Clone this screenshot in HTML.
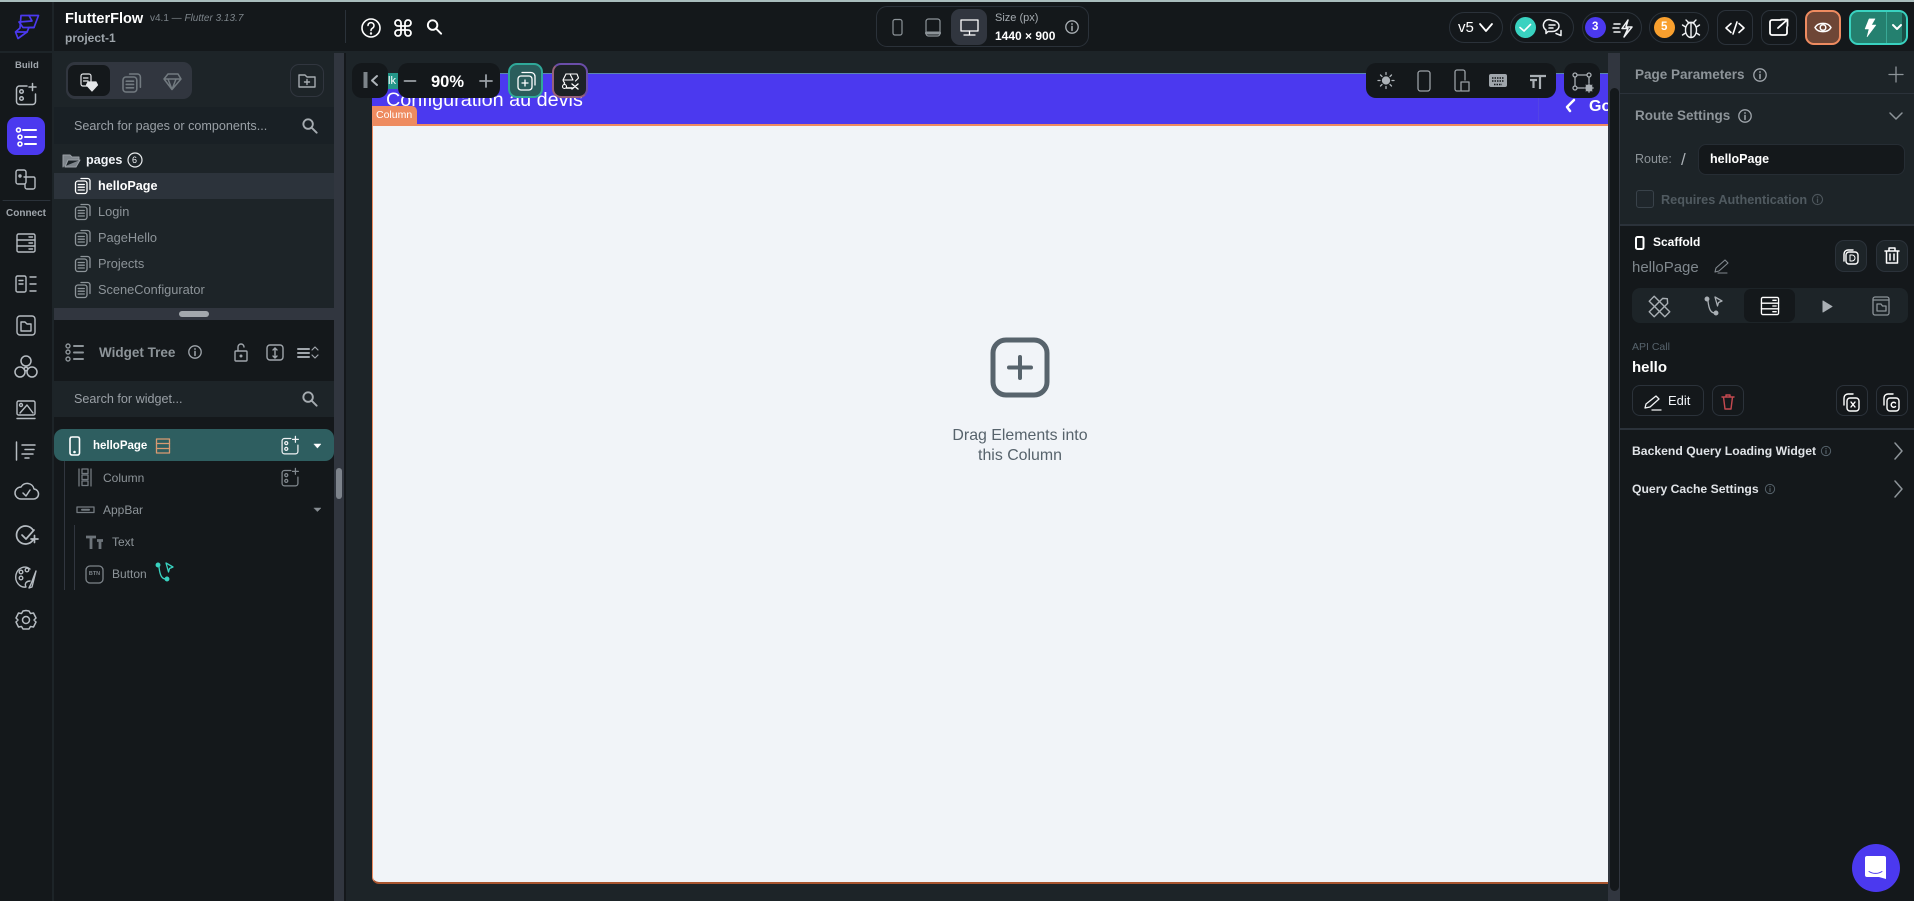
<!DOCTYPE html>
<html><head><meta charset="utf-8"><title>FlutterFlow</title>
<style>
html,body{margin:0;padding:0;background:#14181b;width:1914px;height:901px;overflow:hidden}
body{position:relative;font-family:"Liberation Sans",sans-serif}
.b{position:absolute;box-sizing:border-box}
.t{position:absolute;white-space:nowrap;line-height:1}
svg{position:absolute;left:0;top:0;overflow:visible}
.w{font-weight:700}
</style></head><body>
<!-- Base regions -->
<div class="b" style="left:0;top:0;width:1914px;height:2px;background:#a9bdbd"></div>
<div class="b" style="left:52px;top:2px;width:2px;height:899px;background:#1d2428"></div>
<div class="b" style="left:0;top:51px;width:1914px;height:2px;background:#1d2428"></div>
<div class="b" style="left:345px;top:10px;width:1px;height:33px;background:#2b323a"></div>

<!-- Left panel -->
<div class="b" style="left:54px;top:53px;width:280px;height:267px;background:#1d2428"></div>
<div class="b" style="left:54px;top:107px;width:280px;height:37px;background:#192025"></div>
<div class="b" style="left:334px;top:53px;width:10px;height:848px;background:#31363f"></div>
<div class="b" style="left:54px;top:308px;width:280px;height:12px;background:#31363f"></div>
<div class="b" style="left:179px;top:311px;width:30px;height:6px;border-radius:3px;background:#a3a8ad"></div>
<div class="b" style="left:336px;top:468px;width:6px;height:31px;border-radius:3px;background:#7d838b"></div>
<div class="b" style="left:66px;top:62px;width:126px;height:37px;border-radius:9px;background:#31363f"></div>
<div class="b" style="left:68px;top:65px;width:42px;height:31px;border-radius:7px;background:#14181b"></div>
<div class="b" style="left:290px;top:64px;width:34px;height:33px;border-radius:9px;border:1px solid #31363f"></div>
<div class="b" style="left:54px;top:173px;width:280px;height:26px;background:#2c333b"></div>
<div class="b" style="left:54px;top:381px;width:280px;height:36px;background:#1d2428"></div>
<div class="b" style="left:54px;top:429px;width:280px;height:32px;border-radius:9px;background:#2e5e60"></div>
<div class="b" style="left:64px;top:461px;width:1px;height:129px;background:#31363f"></div>
<div class="b" style="left:74px;top:525px;width:1px;height:65px;background:#31363f"></div>

<!-- Canvas -->
<div class="b" style="left:346px;top:53px;width:1262px;height:848px;background:#1d2428"></div>
<div class="b" style="left:372px;top:73px;width:1236px;height:52px;background:#4b39ef;border-top:1px solid #5a86b0"></div>
<div class="b" style="left:372px;top:124px;width:1236px;height:760px;background:#f1f4f8;border:1px solid #ee8b60;border-right:0;border-radius:0 0 0 7px;border-bottom:2px solid #a8552f"></div>
<div class="b" style="left:372px;top:124px;width:1236px;height:2px;background:#ee8b60"></div>
<div class="b" style="left:388px;top:73px;width:10px;height:16px;background:#249689"></div>
<div class="t" style="left:388px;top:76px;font-size:11px;color:#fff">lk</div>
<div class="t" style="left:386px;top:91px;font-size:19.8px;color:#fff">Configuration au devis</div>
<div class="b" style="left:372px;top:106px;width:45px;height:18px;border-radius:0 5px 0 0;background:#ee8b60"></div>
<div class="t" style="left:376px;top:110px;font-size:10.5px;color:#fff">Column</div>
<div class="b" style="left:1538px;top:74px;width:70px;height:48px;border-left:1px solid #5344e6"></div>
<div class="t w" style="left:1589px;top:99px;font-size:16px;color:#fff;width:19px;overflow:hidden">Go</div>
<div class="t" style="left:950px;top:428px;width:140px;text-align:center;font-size:15.9px;color:#57636c">Drag Elements into</div>
<div class="t" style="left:950px;top:448px;width:140px;text-align:center;font-size:15.9px;color:#57636c">this Column</div>

<!-- Scrollbar center -->
<div class="b" style="left:1608px;top:53px;width:12px;height:848px;background:#31363f"></div>
<div class="b" style="left:1610px;top:88px;width:9px;height:803px;border-radius:5px;background:#14181b"></div>

<!-- Right panel -->
<div class="b" style="left:1620px;top:53px;width:294px;height:172px;background:#1d2428"></div>
<div class="b" style="left:1620px;top:93px;width:294px;height:1px;background:#2b323a"></div>
<div class="b" style="left:1620px;top:224px;width:294px;height:2px;background:#2b323a"></div>
<div class="b" style="left:1698px;top:144px;width:207px;height:31px;border-radius:8px;background:#14181b;border:1px solid #262d34"></div>
<div class="b" style="left:1636px;top:190px;width:18px;height:18px;border-radius:3px;border:1px solid #39424a;background:#1f262b"></div>
<div class="b" style="left:1835px;top:240px;width:32px;height:32px;border-radius:9px;background:#1d2428;border:1px solid #2b323a"></div>
<div class="b" style="left:1876px;top:240px;width:32px;height:32px;border-radius:9px;background:#1d2428;border:1px solid #2b323a"></div>
<div class="b" style="left:1632px;top:288px;width:276px;height:35px;border-radius:8px;background:#1d2428"></div>
<div class="b" style="left:1744px;top:289px;width:51px;height:33px;border-radius:7px;background:#14181b"></div>
<div class="b" style="left:1632px;top:385px;width:72px;height:31px;border-radius:8px;border:1px solid #2b323a"></div>
<div class="b" style="left:1712px;top:385px;width:32px;height:31px;border-radius:8px;border:1px solid #2b323a"></div>
<div class="b" style="left:1836px;top:385px;width:32px;height:31px;border-radius:8px;border:1px solid #2b323a"></div>
<div class="b" style="left:1876px;top:385px;width:32px;height:31px;border-radius:8px;border:1px solid #2b323a"></div>
<div class="b" style="left:1620px;top:428px;width:294px;height:2px;background:#2b323a"></div>
<div class="b" style="left:1852px;top:844px;width:48px;height:48px;border-radius:50%;background:#4b39ef"></div>

<!-- Top bar boxes -->
<div class="b" style="left:876px;top:6px;width:213px;height:41px;border-radius:11px;border:1px solid #2b323a"></div>
<div class="b" style="left:951px;top:9px;width:36px;height:36px;border-radius:9px;background:#31363f"></div>
<div class="b" style="left:1449px;top:12px;width:54px;height:31px;border-radius:16px;border:1px solid #2b323a"></div>
<div class="b" style="left:1510px;top:12px;width:64px;height:31px;border-radius:16px;border:1px solid #2b323a"></div>
<div class="b" style="left:1582px;top:12px;width:60px;height:31px;border-radius:16px;border:1px solid #2b323a"></div>
<div class="b" style="left:1649px;top:12px;width:60px;height:31px;border-radius:16px;border:1px solid #2b323a"></div>
<div class="b" style="left:1717px;top:10px;width:36px;height:35px;border-radius:9px;border:1px solid #2b323a"></div>
<div class="b" style="left:1761px;top:10px;width:36px;height:35px;border-radius:9px;border:1px solid #2b323a"></div>
<div class="b" style="left:1805px;top:10px;width:36px;height:35px;border-radius:9px;background:#6e4636;border:2px solid #ee8b60"></div>
<div class="b" style="left:1849px;top:10px;width:59px;height:35px;border-radius:9px;background:#24806f;border:2px solid #39d2c0;overflow:hidden"><div class="b" style="left:35px;top:0;width:1px;height:31px;background:#39a896"></div><div class="b" style="left:51px;top:0;width:6px;height:31px;background:#1a4f48"></div></div>
<div class="b" style="left:1515px;top:17px;width:21px;height:21px;border-radius:50%;background:#39d2c0"></div>
<div class="b" style="left:1585px;top:17px;width:21px;height:21px;border-radius:50%;background:#4b39ef"></div>
<div class="b" style="left:1654px;top:17px;width:21px;height:21px;border-radius:50%;background:#f9a02e"></div>

<!-- Floating toolbars -->
<div class="b" style="left:352px;top:63px;width:36px;height:35px;border-radius:10px;background:#14181b"></div>
<div class="b" style="left:398px;top:63px;width:102px;height:35px;border-radius:10px;background:#14181b"></div>
<div class="b" style="left:508px;top:63px;width:35px;height:35px;border-radius:9px;background:#2a5d5c;border:2px solid #2fa899"></div>
<div class="b" style="left:552px;top:63px;width:36px;height:35px;border-radius:9px;background:#1d2226;border:2px solid #6a4da8;border-bottom-color:#96607a;border-left-color:#96607a"></div>
<div class="b" style="left:1366px;top:63px;width:190px;height:35px;border-radius:10px;background:#14181b"></div>
<div class="b" style="left:1564px;top:63px;width:36px;height:35px;border-radius:10px;background:#14181b"></div>
<div class="t w" style="left:431px;top:74px;font-size:16.5px;color:#fff">90%</div>

<svg width="1914" height="901" viewBox="0 0 1914 901" fill="none" stroke-linecap="round" stroke-linejoin="round">
<defs>
<symbol id="info" viewBox="-8 -8 16 16" overflow="visible"><circle r="6.2" stroke="currentColor" stroke-width="1.3" fill="none"/><path d="M0-.6V3.4" stroke="currentColor" stroke-width="1.5" fill="none"/><circle cy="-3" r=".9" fill="currentColor"/></symbol>
<symbol id="page" viewBox="-10 -10 20 20" overflow="visible"><g fill="none" stroke="currentColor" stroke-width="1.3"><rect x="-7.5" y="-5" width="11.5" height="12.5" rx="2.5"/><path d="M-2-7.5H4.5a2.5 2.5 0 0 1 2.5 2.5V3.5M-4.8-1.5H1.3M-4.8 1.2H1.3M-4.8 4H1.3"/></g></symbol>
<symbol id="search" viewBox="-10 -10 20 20" overflow="visible"><g fill="none" stroke="currentColor" stroke-width="2"><circle cx="-2" cy="-2" r="5"/><path d="M2 2L7 7"/></g></symbol>
<symbol id="addw" viewBox="-12 -12 24 24" overflow="visible"><g fill="none" stroke="currentColor" stroke-width="1.5"><path d="M1-9H-6.5A3 3 0 0 0-9.5-6V6.5A3 3 0 0 0-6.5 9.5H6.5A3 3 0 0 0 9.5 6.500V-1"/><circle cx="-4.500" cy="-3.500" r="1.800"/><circle cx="-4.500" cy="3.500" r="1.800"/><path d="M6.500-11.500V-4.500M3-8H10"/></g></symbol>
<symbol id="server" viewBox="-10 -10 20 20" overflow="visible"><g fill="none" stroke="currentColor" stroke-width="1.4"><rect x="-9" y="-9" width="18" height="18" rx="1.500"/><path d="M-9-3H9M-9 3H9M3-6H6.500M3 0H6.500M3 6H6.500"/></g></symbol>
<symbol id="flow" viewBox="-10 -10 20 20" overflow="visible"><g fill="none" stroke="currentColor" stroke-width="1.3"><circle cx="-7" cy="-7" r="1.800" fill="currentColor"/><circle cx="2" cy="7" r="1.800" fill="currentColor"/><path d="M-6-5C-5 4-3 7 1 7M1-9L8-5L4.500-3.500L3.500 0Z"/></g></symbol>
</defs>

<!-- logo -->
<g stroke="#4b39ef" stroke-width="1.700"><path d="M21 15.500H38.500L34 27.500H29L27 32L18 38.500L15.500 32L20 28Z"/><path d="M19 22L32 21L29 15.500M19 22L23 27.500H34M16 32H27"/></g>

<!-- left rail -->
<g color="#b6bcc2" stroke="#b6bcc2">
<use href="#addw" x="14" y="83" width="24" height="24"/>
<rect x="7" y="117" width="38" height="38" rx="9" fill="#4b39ef" stroke="none"/>
<g stroke="#fff" stroke-width="1.600"><circle cx="18.500" cy="130" r="2"/><circle cx="20" cy="137" r="2"/><circle cx="20" cy="144" r="2"/><path d="M23 130H36M25 137H36M25 144H36" stroke-width="2"/></g>
<g stroke-width="1.400"><rect x="16" y="170" width="10" height="14" rx="2"/><path d="M24 177H34a2 2 0 0 1 1 2V187a2 2 0 0 1-2 2H27a2 2 0 0 1-2-2V184"/><circle cx="20" cy="176" r="1"/></g>
<path d="M3 200.500H50" stroke="#2b323a" stroke-width="1"/>
<use href="#server" x="16" y="233" width="20" height="20" stroke="none"/>
<g stroke-width="1.400"><rect x="16" y="276" width="10" height="16" rx="1.500"/><path d="M19 280.500h4M19 284h4M30 277H36M30 284H36M30 291H36" /></g>
<g stroke-width="1.400"><rect x="17" y="316" width="18" height="19" rx="3"/><path d="M21 328V322H25L27 324H31V331H21Z"/></g>
<g stroke-width="1.500"><circle cx="26" cy="361" r="5"/><circle cx="20" cy="372" r="5"/><circle cx="32" cy="372" r="5"/><circle cx="26" cy="369" r="1.800"/></g>
<g stroke-width="1.400"><rect x="17" y="401" width="18" height="14" rx="1.500"/><path d="M20 413L27 405L33 413M17 418.500H35"/><circle cx="21" cy="405" r="1.500"/></g>
<g stroke-width="1.500"><path d="M16.500 442V460M22 445H35M25 449.500H34M22 454H33M25 458H29"/></g>
<path d="M21 499H33a5 5 0 0 0 1-10A7 7 0 0 0 21 487A6 6 0 0 0 21 499ZM23 493L26 496L30 490" stroke-width="1.500"/>
<path d="M33 530A9 9 0 1 0 33 540M22 535L26 539L34 530M31 539H38M34.500 535.500V542.500" stroke-width="1.700"/>
<g stroke-width="1.400"><path d="M30 569A9 10 0 1 0 26 587C24 583 27 581 30 581"/><circle cx="21" cy="572" r="1.800"/><circle cx="21" cy="578" r="1.800"/><circle cx="27" cy="570" r="1.800"/><path d="M36 571L31 584L29 588L32 587Z"/></g>
<g stroke-width="1.500"><circle cx="26" cy="620" r="3.500"/><path d="M26 610.500L29 611L30.500 613.500L33.500 613L36 618L34 620L36 622L33.500 627L30.500 626.500L29 629L23 629L21.500 626.500L18.500 627L16 622L18 620L16 618L18.500 613L21.500 613.500L23 611Z"/></g>
</g>

<!-- left panel icons -->
<g color="#c9ced3" stroke="#e5e7ea" stroke-width="1.200"><rect x="81" y="74" width="10" height="12" rx="2"/><path d="M83.500 78H88M83.500 81H88"/><path d="M88 82H96L97.500 85L92 91L86.500 85Z" fill="#e5e7ea"/></g>
<use href="#page" x="120" y="71" width="24" height="24" color="#727a80"/>
<g stroke="#727a80" stroke-width="1.500"><path d="M168 74H178L181 79L172 89.500L164 79ZM164 79H181M168 79L172 89.500L176 79"/></g>
<path d="M299 87V75H305L307 77H315V87ZM304.500 82H309.500M307 79.500V84.500" stroke="#a5abb0" stroke-width="1.400"/>
<use href="#search" x="300.500" y="116.500" width="19" height="19" color="#a5abb0"/>
<path d="M63 167V155H70L72 157H79V160H68L65 167H76L80 160" stroke="#9aa0a6" fill="#7d848a" stroke-width="1"/>
<circle cx="135" cy="160" r="7" stroke="#e8ebed" stroke-width="1.200"/>
<use href="#page" x="73" y="176" width="20" height="20" color="#fff"/>
<use href="#page" x="73" y="202" width="20" height="20" color="#8d9499"/>
<use href="#page" x="73" y="228" width="20" height="20" color="#8d9499"/>
<use href="#page" x="73" y="254" width="20" height="20" color="#8d9499"/>
<use href="#page" x="73" y="280" width="20" height="20" color="#8d9499"/>

<g stroke="#8d9499" stroke-width="1.400"><circle cx="68" cy="346" r="2"/><circle cx="68" cy="352" r="2"/><circle cx="68" cy="359" r="2"/><path d="M74 346H83M74 352.500H83M74 359H83" stroke-width="2"/></g>
<use href="#info" x="187" y="344" width="16" height="16" color="#a0a6ac"/>
<g stroke="#a0a6ac" stroke-width="1.400"><rect x="235" y="351" width="12" height="10" rx="1"/><path d="M238 351V347a3 3 0 0 1 6 0"/><circle cx="241" cy="356" r=".8"/></g>
<g stroke="#a0a6ac" stroke-width="1.400"><rect x="267" y="345" width="16" height="15" rx="3"/><path d="M275 348V358M273 350L275 348L277 350M273 356L275 358L277 356"/></g>
<path d="M298 349H309M298 353H309M298 357H309" stroke="#a0a6ac" stroke-width="2"/>
<path d="M312 350L315 347L318 350M312 355L315 358L318 355" stroke="#a0a6ac" stroke-width="1.200"/>
<use href="#search" x="300.500" y="389.500" width="19" height="19" color="#a5abb0"/>

<g stroke="#fff" fill="#fff" stroke-width="1"><rect x="70" y="437" width="9.500" height="18" rx="2" stroke-width="1.600" fill="none"/><circle cx="74.500" cy="452" r=".8"/><path d="M70.500 437H79" /></g>
<g stroke="#d99a72" stroke-width="1.300"><rect x="156.500" y="439" width="13" height="14" /><path d="M156.500 443.500H169.500M156.500 448.500H169.500"/></g>
<use href="#addw" x="280" y="436" width="20" height="20" color="#f0f2f4"/>
<path d="M314 444H321L317.500 448Z" fill="#fff" stroke="#fff" stroke-width=".5"/>
<g stroke="#737a80" stroke-width="1.300"><path d="M79 469V486M91 469V486"/><rect x="82" y="469" width="6" height="4.500"/><rect x="82" y="475" width="6" height="4.500"/><rect x="82" y="481" width="6" height="4.500"/></g>
<use href="#addw" x="280" y="468" width="20" height="20" color="#82898f"/>
<g stroke="#737a80" stroke-width="1.300"><rect x="77" y="507" width="17" height="5.500"/><path d="M82 509.800H89" stroke-width="2"/></g>
<path d="M314 508H321L317.500 511.500Z" fill="#878d93" stroke="#878d93" stroke-width=".5"/>
<path d="M86 537H96M91 537V549M97 540.500H103M100 540.500V549" stroke="#6d747a" stroke-width="2.800" stroke-linecap="butt"/>
<rect x="86" y="566" width="17" height="17" rx="4" stroke="#7d848a" stroke-width="1.300"/>
<use href="#flow" x="155" y="562" width="20" height="20" color="#39d2c0"/>

<!-- top toolbar left -->
<g stroke="#fff"><circle cx="371" cy="28" r="9" stroke-width="1.600"/><path d="M368 25.500a3 3 0 1 1 4.500 2.700c-1 .6-1.500 1-1.500 2.300" stroke-width="1.500"/><circle cx="371" cy="33.500" r=".7" stroke-width="1"/>
<path d="M400 23V33a3 3 0 1 1-3-3H407a3 3 0 1 1-3 3V23a3 3 0 1 1 3 3H397a3 3 0 1 1 3-3Z" stroke-width="1.800" transform="translate(1 0)"/></g>
<use href="#search" x="425" y="17.500" width="19" height="19" color="#fff"/>

<!-- device icons -->
<rect x="893" y="19.500" width="9" height="15.500" rx="2" stroke="#8d9499" stroke-width="1.200"/>
<rect x="926" y="19" width="14" height="17" rx="2.500" stroke="#8d9499" stroke-width="1.200"/><path d="M926.500 33H939.500" stroke="#8d9499" stroke-width="3"/>
<g stroke="#fff"><rect x="961" y="20" width="17" height="11" stroke-width="1.300"/><path d="M969.500 31V34M964 35H975" stroke-width="1.300"/></g>
<use href="#info" x="1064" y="19" width="16" height="16" color="#a9afb4"/>

<!-- top right icons -->
<path d="M1480 24L1486 31L1492 24" stroke="#fff" stroke-width="1.800"/>
<path d="M1520 27.500L1524 31L1530.500 24.500" stroke="#fff" stroke-width="1.600"/>
<g stroke="#f0f2f4" stroke-width="1.500"><path d="M1552 20.500a7 5.500 0 0 1 0 11H1548L1546 33.500V30a5.500 5.500 0 0 1 6-9.500ZM1549 25H1555M1549 28H1553M1556 33.500L1561 35.500V30.500"/></g>
<g stroke="#f0f2f4" stroke-width="1.500"><path d="M1614 24H1620M1613 28H1619M1614 32H1620"/><path d="M1628 20L1622 28.500H1628L1624 37L1632 27H1626L1628 20Z"/></g>
<g stroke="#f0f2f4" stroke-width="1.400"><ellipse cx="1691" cy="30" rx="5.500" ry="7.500"/><path d="M1691 23V37M1688 22L1686 20M1694 22L1696 20M1685.500 27L1682.500 25M1696.500 27L1699.500 25M1685.500 33L1682.500 35M1696.500 33L1699.500 35M1688 22.500H1694"/></g>
<path d="M1731 23.500L1726 28L1731 32.500M1739 23.500L1744 28L1739 32.500M1737 22L1733 34" stroke="#fff" stroke-width="1.600"/>
<path d="M1781 20H1772a2 2 0 0 0-2 2V33a2 2 0 0 0 2 2H1785a2 2 0 0 0 2-2V27" stroke="#fff" stroke-width="1.800"/><path d="M1778 28L1787 20M1781 19.500H1787.500V26" stroke="#fff" stroke-width="1.800"/>
<path d="M1815 27.500C1818 22 1828 22 1831 27.500C1828 33 1818 33 1815 27.500Z" stroke="#fff" stroke-width="1.500"/><circle cx="1823" cy="27.500" r="2.800" stroke="#fff" stroke-width="1.500"/>
<path d="M1869 19L1865 29H1869L1867 37L1876 25H1871.500L1875 19Z" fill="#fff" stroke="#fff" stroke-width=".5"/>
<path d="M1893 25L1897 29L1901 25" stroke="#fff" stroke-width="2"/>

<!-- floating toolbar icons -->
<path d="M365.500 72V88" stroke="#7d848a" stroke-width="4" stroke-linecap="butt"/><path d="M377 76L372 80.500L377 85" stroke="#aeb4b9" stroke-width="2"/>
<path d="M404.500 81H415.500M480 81H492M486 75V87" stroke="#9aa0a6" stroke-width="1.800"/>
<g stroke="#fff" stroke-width="1.300"><rect x="518" y="76" width="14" height="14" rx="3"/><path d="M522 72.500H531a4 4 0 0 1 4 4V85M525 80V86M522 83H528"/></g>
<g stroke="#fff" stroke-width="1.100"><path d="M566 74H577L578.500 78L575.500 81M566 74L563 80H573L570 74M563 80C563 82 566 83 564 84"/><circle cx="564.500" cy="86.500" r="2"/><path d="M566.500 88H572M572 84L578 89M578 84L572 89" stroke-width="1.400"/></g>
<g stroke="#aeb4b9" stroke-width="1.300"><circle cx="1386" cy="80.500" r="3.500" fill="#aeb4b9"/><path d="M1386 72.500V74.500M1386 86.500V88.500M1378 80.500H1380M1392 80.500H1394M1380.500 75L1382 76.500M1390 84.500L1391.500 86M1380.500 86L1382 84.500M1390 76.500L1391.500 75"/></g>
<rect x="1418" y="71" width="12" height="20" rx="2.500" stroke="#9aa0a6" stroke-width="1.300"/>
<g stroke="#9aa0a6" stroke-width="1.300"><path d="M1465 73V72a2 2 0 0 0-2-2H1457a2 2 0 0 0-2 2V89a2 2 0 0 0 2 2H1460"/><rect x="1461" y="82" width="8" height="9"/><path d="M1465 73V80"/></g>
<rect x="1489" y="74" width="18" height="13" rx="2" fill="#a0a6ac"/><path d="M1492 78H1504M1492 81H1504M1494 84.500H1502" stroke="#14181b" stroke-width="1.400" stroke-dasharray="1.500 1" stroke-linecap="butt"/>
<g stroke="#a9afb4" stroke-width="2.200" stroke-linecap="butt"><path d="M1530 76H1546M1540 76V89M1530 80H1537M1533.500 80V88"/></g>
<g stroke="#a9afb4" stroke-width="1.300"><circle cx="1575" cy="75" r="2"/><circle cx="1589" cy="75" r="2"/><circle cx="1575" cy="88" r="2"/><path d="M1577 75H1587M1575 77V86M1589 77V83M1577 88H1584"/><circle cx="1589" cy="88" r="3" fill="#a9afb4"/><path d="M1589 83.500V92.500M1584.500 88H1593.500M1586 85L1592 91M1592 85L1586 91" stroke-width="1"/></g>

<!-- back arrow -->
<path d="M1574 100L1567 107L1570 111" stroke="#fff" stroke-width="2.500"/>

<!-- plus -->
<rect x="993" y="340" width="54" height="55" rx="13" stroke="#57636c" stroke-width="5"/>
<path d="M1020 357V378M1009 367.500H1031" stroke="#57636c" stroke-width="4"/>

<!-- right panel icons -->
<use href="#info" x="1752" y="67" width="16" height="16" color="#a0a6ac"/>
<path d="M1896 67V82M1889 74.500H1903" stroke="#8d9499" stroke-width="1.300"/>
<use href="#info" x="1737" y="108" width="16" height="16" color="#a0a6ac"/>
<path d="M1890 113L1896 119L1902 113" stroke="#8d9499" stroke-width="1.500"/>
<use href="#info" x="1811" y="193" width="13" height="13" color="#4d565c"/>
<rect x="1636" y="237" width="7.500" height="12" rx="1.500" stroke="#fff" stroke-width="2"/>
<path d="M1715 272L1716 268L1725 260L1728 263L1719 271ZM1718 273H1727" stroke="#82898f" stroke-width="1.100"/>
<g stroke="#fff" stroke-width="1.400"><rect x="1846" y="252" width="12" height="12" rx="3"/><path d="M1844 261a5 5 0 0 1 0-1V254a4 4 0 0 1 4-4H1853"/><path d="M1850 255V261H1852a3 3 0 0 0 0-6Z" stroke-width="1"/></g>
<g stroke="#fff" stroke-width="1.500"><path d="M1885 251H1899M1889 251V248H1895V251M1886.500 251V263H1897.500V251M1890 254V260M1894 254V260"/></g>
<g stroke="#a9afb4" stroke-width="1.400" transform="translate(1659.500 306.500)"><rect x="-11" y="-3.500" width="22" height="7" transform="rotate(45)"/><path d="M-11-3.500H8L11 0L8 3.500H-11Z" transform="rotate(-45)"/></g>
<use href="#flow" x="1704" y="296" width="20" height="20" color="#a9afb4"/>
<use href="#server" x="1760.500" y="296.500" width="19" height="19" color="#fff"/>
<path d="M1823 301L1832 306.500L1823 312Z" fill="#a9afb4" stroke="#a9afb4"/>
<g stroke="#8d9499" stroke-width="1.300"><rect x="1873" y="297" width="16" height="18" rx="2"/><path d="M1873 300H1889M1877 304H1881L1882.500 306H1886V311H1877Z" /></g>
<path d="M1645 408L1646 404L1656 396L1659 399L1650 407ZM1652 410H1661" stroke="#f0f2f4" stroke-width="1.300"/>
<path d="M1722 397H1734M1726 397V395H1730V397M1723.500 397L1725 409H1731L1732.500 397" stroke="#ff5963" stroke-width="1.400" opacity=".75"/>
<g stroke="#fff" stroke-width="1.400"><rect x="1847" y="398" width="12" height="13" rx="3"/><path d="M1844 405V398a4 4 0 0 1 4-4H1853M1851 402L1855 407M1855 402L1851 407"/></g>
<g stroke="#fff" stroke-width="1.400"><rect x="1887" y="398" width="12" height="13" rx="3"/><path d="M1884 405V398a4 4 0 0 1 4-4H1893M1895.500 403a2.500 2.500 0 1 0 0 3.500"/></g>
<use href="#info" x="1820" y="445" width="12" height="12" color="#57636c"/>
<path d="M1895 443L1902 451L1895 459" stroke="#8d9499" stroke-width="1.500"/>
<use href="#info" x="1764" y="483" width="12" height="12" color="#57636c"/>
<path d="M1895 481L1902 489L1895 497" stroke="#8d9499" stroke-width="1.500"/>

<!-- chat -->
<path d="M1867 856H1884a2 2 0 0 1 2 2V879L1879 877H1867a2 2 0 0 1-2-2V858a2 2 0 0 1 2-2Z" fill="#fff"/>
<path d="M1869 871.500C1873 874 1878 874 1882 871.500" stroke="#4b39ef" stroke-width="1"/>
</svg>

<!-- Top bar text -->
<div class="t w" style="left:65px;top:12px;font-size:14.5px;color:#fff">FlutterFlow</div>
<div class="t" style="left:150px;top:14px;font-size:10px;color:#7c848a">v4.1 — <i>Flutter 3.13.7</i></div>
<div class="t w" style="left:65px;top:32px;font-size:12px;color:#9ea5ab">project-1</div>
<div class="t" style="left:995px;top:13px;font-size:11px;color:#a5abb0">Size (px)</div>
<div class="t w" style="left:995px;top:30px;font-size:12px;color:#fff">1440 × 900</div>
<div class="t" style="left:1458px;top:20px;font-size:15px;color:#fff">v5</div>
<div class="t w" style="left:1592px;top:22px;font-size:11.5px;color:#fff">3</div>
<div class="t w" style="left:1661px;top:22px;font-size:11.5px;color:#fff">5</div>

<!-- Rail text -->
<div class="t w" style="left:15px;top:61px;font-size:9.5px;color:#a0a6ac">Build</div>
<div class="t w" style="left:6px;top:209px;font-size:10px;color:#a0a6ac">Connect</div>

<!-- Left panel text -->
<div class="t" style="left:74px;top:120px;font-size:12.6px;color:#9aa0a6">Search for pages or components...</div>
<div class="t w" style="left:86px;top:154px;font-size:12.6px;color:#f1f4f8">pages</div>
<div class="t" style="left:132px;top:156px;font-size:9px;color:#f1f4f8">6</div>
<div class="t w" style="left:98px;top:180px;font-size:12.6px;color:#fff">helloPage</div>
<div class="t" style="left:98px;top:206px;font-size:12.8px;color:#8d9499">Login</div>
<div class="t" style="left:98px;top:232px;font-size:12.8px;color:#8d9499">PageHello</div>
<div class="t" style="left:98px;top:258px;font-size:12.8px;color:#8d9499">Projects</div>
<div class="t" style="left:98px;top:284px;font-size:12.8px;color:#8d9499">SceneConfigurator</div>
<div class="t w" style="left:99px;top:346px;font-size:13.5px;color:#8d9499">Widget Tree</div>
<div class="t" style="left:74px;top:393px;font-size:12.6px;color:#9aa0a6">Search for widget...</div>
<div class="t w" style="left:93px;top:441px;font-size:11.5px;color:#fff">helloPage</div>
<div class="t" style="left:103px;top:472px;font-size:12px;color:#8d9499">Column</div>
<div class="t" style="left:103px;top:504px;font-size:12px;color:#8d9499">AppBar</div>
<div class="t" style="left:112px;top:536px;font-size:12px;color:#8d9499">Text</div>
<div class="t" style="left:112px;top:568px;font-size:12px;color:#8d9499">Button</div>
<div class="t w" style="left:86px;top:571.5px;width:17px;text-align:center;font-size:5.5px;color:#7d848a">BTN</div>

<!-- Right panel text -->
<div class="t w" style="left:1635px;top:68px;font-size:13.5px;color:#8d9499">Page Parameters</div>
<div class="t w" style="left:1635px;top:109px;font-size:13.5px;color:#8d9499">Route Settings</div>
<div class="t" style="left:1635px;top:153px;font-size:12.5px;color:#8d9499">Route:</div>
<div class="t" style="left:1681px;top:151px;font-size:17px;color:#a9afb4">/</div>
<div class="t w" style="left:1710px;top:153px;font-size:12.5px;color:#fff">helloPage</div>
<div class="t w" style="left:1661px;top:194px;font-size:12.7px;color:#505a60">Requires Authentication</div>
<div class="t w" style="left:1653px;top:236px;font-size:12px;color:#fff">Scaffold</div>
<div class="t" style="left:1632px;top:260px;font-size:15px;color:#7f878d">helloPage</div>
<div class="t" style="left:1632px;top:342px;font-size:10.5px;color:#57636c">API Call</div>
<div class="t w" style="left:1632px;top:360px;font-size:15px;color:#fff">hello</div>
<div class="t" style="left:1668px;top:394px;font-size:13px;color:#f1f4f8">Edit</div>
<div class="t w" style="left:1632px;top:445px;font-size:12.2px;color:#e0e3e7">Backend Query Loading Widget</div>
<div class="t w" style="left:1632px;top:483px;font-size:12.2px;color:#e0e3e7">Query Cache Settings</div>
</body></html>
